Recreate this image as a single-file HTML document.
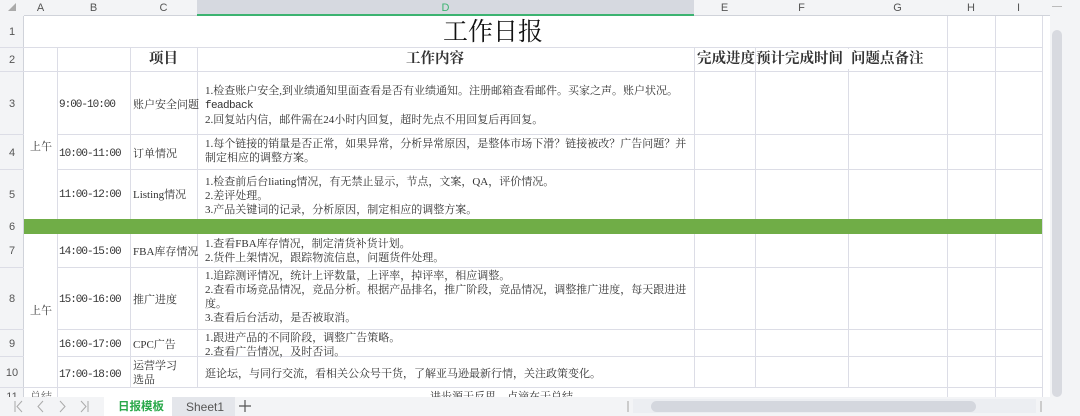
<!DOCTYPE html>
<html><head><meta charset="utf-8"><style>
*{margin:0;padding:0;box-sizing:border-box}
body{width:1080px;height:416px;overflow:hidden;background:#fff;position:relative;font-family:"Liberation Serif","Noto Serif CJK SC",serif;color:#333}
.a{position:absolute}
.h{background:#f3f4f6;color:#555;font-family:"Liberation Sans","Noto Sans CJK SC",sans-serif;font-size:11px;text-align:center}
.vl{position:absolute;width:1px;background:#dcdde6}
.hl{position:absolute;height:1px;background:#dcdde6}
.t{position:absolute;font-size:11px;line-height:14px;white-space:nowrap}
.m{font-family:"Liberation Mono",monospace;font-size:11px;letter-spacing:-1px}
.b{font-weight:bold;font-size:14.5px}
</style></head><body>
<div class="a h" style="left:0;top:0;width:1050px;height:16px;border-bottom:1px solid #d0d3da"></div>
<div class="a" style="left:197px;top:0;width:497px;height:16px;background:#d6d9e0;border-bottom:2px solid #3cb371"></div>
<div class="a h" style="left:0;top:0;width:24px;height:16px;background:#f3f4f6;color:#aaa;font-size:8px;line-height:16px">◢</div>
<div class="t h" style="left:24px;top:1px;width:33px;background:none">A</div>
<div class="t h" style="left:57px;top:1px;width:73px;background:none">B</div>
<div class="t h" style="left:130px;top:1px;width:67px;background:none">C</div>
<div class="t h" style="left:197px;top:1px;width:497px;background:none;color:#3cb371">D</div>
<div class="t h" style="left:694px;top:1px;width:61px;background:none">E</div>
<div class="t h" style="left:755px;top:1px;width:93px;background:none">F</div>
<div class="t h" style="left:848px;top:1px;width:99px;background:none">G</div>
<div class="t h" style="left:947px;top:1px;width:48px;background:none">H</div>
<div class="t h" style="left:995px;top:1px;width:47px;background:none">I</div>
<div class="a h" style="left:0;top:16px;width:24px;height:381px;border-right:1px solid #d0d3da"></div>
<div class="t h" style="left:0;top:25px;width:24px;background:none">1</div>
<div class="t h" style="left:0;top:53px;width:24px;background:none">2</div>
<div class="t h" style="left:0;top:97px;width:24px;background:none">3</div>
<div class="t h" style="left:0;top:146px;width:24px;background:none">4</div>
<div class="t h" style="left:0;top:188px;width:24px;background:none">5</div>
<div class="t h" style="left:0;top:220px;width:24px;background:none">6</div>
<div class="t h" style="left:0;top:244px;width:24px;background:none">7</div>
<div class="t h" style="left:0;top:292px;width:24px;background:none">8</div>
<div class="t h" style="left:0;top:337px;width:24px;background:none">9</div>
<div class="t h" style="left:0;top:366px;width:24px;background:none">10</div>
<div class="hl" style="left:0;top:47px;width:1042px"></div>
<div class="hl" style="left:0;top:71px;width:1042px"></div>
<div class="hl" style="left:0;top:134px;width:1042px"></div>
<div class="hl" style="left:0;top:169px;width:1042px"></div>
<div class="hl" style="left:0;top:267px;width:1042px"></div>
<div class="hl" style="left:0;top:329px;width:1042px"></div>
<div class="hl" style="left:0;top:356px;width:1042px"></div>
<div class="hl" style="left:0;top:387px;width:1042px"></div>
<div class="a" style="left:24px;top:134px;width:33px;height:1px;background:#fff"></div>
<div class="a" style="left:24px;top:169px;width:33px;height:1px;background:#fff"></div>
<div class="a" style="left:24px;top:267px;width:33px;height:1px;background:#fff"></div>
<div class="a" style="left:24px;top:329px;width:33px;height:1px;background:#fff"></div>
<div class="a" style="left:24px;top:356px;width:33px;height:1px;background:#fff"></div>
<div class="vl" style="left:57px;top:47px;height:350px"></div>
<div class="vl" style="left:130px;top:47px;height:341px"></div>
<div class="vl" style="left:197px;top:47px;height:341px"></div>
<div class="vl" style="left:694px;top:47px;height:341px"></div>
<div class="vl" style="left:755px;top:47px;height:341px"></div>
<div class="vl" style="left:848px;top:47px;height:341px"></div>
<div class="vl" style="left:947px;top:16px;height:381px"></div>
<div class="vl" style="left:995px;top:16px;height:381px"></div>
<div class="vl" style="left:1042px;top:16px;height:381px"></div>
<div class="a" style="left:24px;top:219px;width:1018px;height:15px;background:#70ad47"></div>
<div class="t" style="left:443px;top:17px;font-size:25px;line-height:32px;color:#111">工作日报</div>
<div class="t b" style="left:149px;top:52px">项目</div>
<div class="t b" style="left:406px;top:52px">工作内容</div>
<div class="t b" style="left:697px;top:52px">完成进度</div>
<div class="t b" style="left:756px;top:52px">预计完成时间</div>
<div class="a" style="left:848px;top:49px;width:4px;height:20px;background:#fff"></div>
<div class="t b" style="left:851px;top:52px">问题点备注</div>

<div class="t" style="left:30px;top:140px">上午</div>
<div class="t" style="left:30px;top:304px">上午</div>

<div class="t m" style="left:59px;top:98px">9:00-10:00</div>
<div class="t m" style="left:59px;top:147px">10:00-11:00</div>
<div class="t m" style="left:59px;top:188px">11:00-12:00</div>
<div class="t m" style="left:59px;top:245px">14:00-15:00</div>
<div class="t m" style="left:59px;top:293px">15:00-16:00</div>
<div class="t m" style="left:59px;top:338px">16:00-17:00</div>
<div class="t m" style="left:59px;top:368px">17:00-18:00</div>

<div class="t" style="left:133px;top:98px">账户安全问题</div>
<div class="t" style="left:133px;top:147px">订单情况</div>
<div class="t" style="left:133px;top:188px">Listing情况</div>
<div class="t" style="left:133px;top:245px">FBA库存情况</div>
<div class="t" style="left:133px;top:293px">推广进度</div>
<div class="t" style="left:133px;top:338px">CPC广告</div>
<div class="t" style="left:133px;top:359px">运营学习<br>选品</div>

<div class="t" style="left:205px;top:84px">1.检查账户安全,到业绩通知里面查看是否有业绩通知。注册邮箱查看邮件。买家之声。账户状况。<br><span class="m" style="letter-spacing:-0.6px">feadback</span><br>2.回复站内信，邮件需在24小时内回复，超时先点不用回复后再回复。</div>
<div class="t" style="left:205px;top:137px">1.每个链接的销量是否正常，如果异常，分析异常原因，是整体市场下滑？链接被改？广告问题？并<br>制定相应的调整方案。</div>
<div class="t" style="left:205px;top:175px">1.检查前后台liating情况，有无禁止显示，节点，文案，QA，评价情况。<br>2.差评处理。<br>3.产品关键词的记录，分析原因，制定相应的调整方案。</div>
<div class="t" style="left:205px;top:237px">1.查看FBA库存情况，制定清货补货计划。<br>2.货件上架情况，跟踪物流信息，问题货件处理。</div>
<div class="t" style="left:205px;top:269px">1.追踪测评情况，统计上评数量，上评率，掉评率，相应调整。<br>2.查看市场竞品情况，竞品分析。根据产品排名，推广阶段，竞品情况，调整推广进度，每天跟进进<br>度。<br>3.查看后台活动，是否被取消。</div>
<div class="t" style="left:205px;top:331px">1.跟进产品的不同阶段，调整广告策略。<br>2.查看广告情况，及时否词。</div>
<div class="t" style="left:205px;top:367px">逛论坛，与同行交流，看相关公众号干货，了解亚马逊最新行情，关注政策变化。</div>
<div class="t" style="left:430px;top:390px">进步源于反思，点滴在于总结</div>
<div class="t" style="left:30px;top:390px;color:#666">总结</div>
<div class="t h" style="left:0;top:390px;width:24px;background:none">11</div>

<div class="a" style="left:0;top:397px;width:1080px;height:19px;background:#f3f4f6"></div>
<svg class="a" style="left:0;top:397px" width="100" height="19" viewBox="0 0 100 19" fill="none" stroke="#aaa" stroke-width="1">
<path d="M15 4v11M22 4l-5 5.5 5 5.5"/><path d="M43 4l-5 5.5 5 5.5"/><path d="M60 4l5 5.5-5 5.5"/><path d="M81 4l5 5.5-5 5.5M88 4v11"/>
</svg>
<div class="a" style="left:104px;top:397px;width:68px;height:19px;background:#fff"></div>
<div class="t" style="left:118px;top:400px;font-family:'Liberation Sans','Noto Sans CJK SC',sans-serif;font-size:11.5px;color:#2aa84a;font-weight:bold">日报模板</div>
<div class="a" style="left:172px;top:397px;width:63px;height:19px;background:#e4e6eb"></div>
<div class="t" style="left:186px;top:400px;font-family:'Liberation Sans',sans-serif;font-size:12px;color:#555">Sheet1</div>
<svg class="a" style="left:238px;top:399px" width="14" height="14" stroke="#555" stroke-width="1.2"><path d="M7 1v12M1 7h12"/></svg>
<div class="a" style="left:627px;top:401px;width:2px;height:11px;background:#ccc"></div>
<div class="a" style="left:633px;top:399px;width:403px;height:14px;background:#eceef2"></div>
<div class="a" style="left:651px;top:401px;width:325px;height:11px;background:#d4d7de;border-radius:6px"></div>
<div class="a" style="left:1040px;top:401px;width:2px;height:11px;background:#ccc"></div>
<div class="a" style="left:1050px;top:0;width:30px;height:397px;background:#f3f4f6"></div>
<div class="a" style="left:1052px;top:6px;width:10px;height:1px;background:#bbb"></div>
<div class="a" style="left:1052px;top:30px;width:10px;height:367px;background:#d8dae0;border-radius:5px"></div>
</body></html>
